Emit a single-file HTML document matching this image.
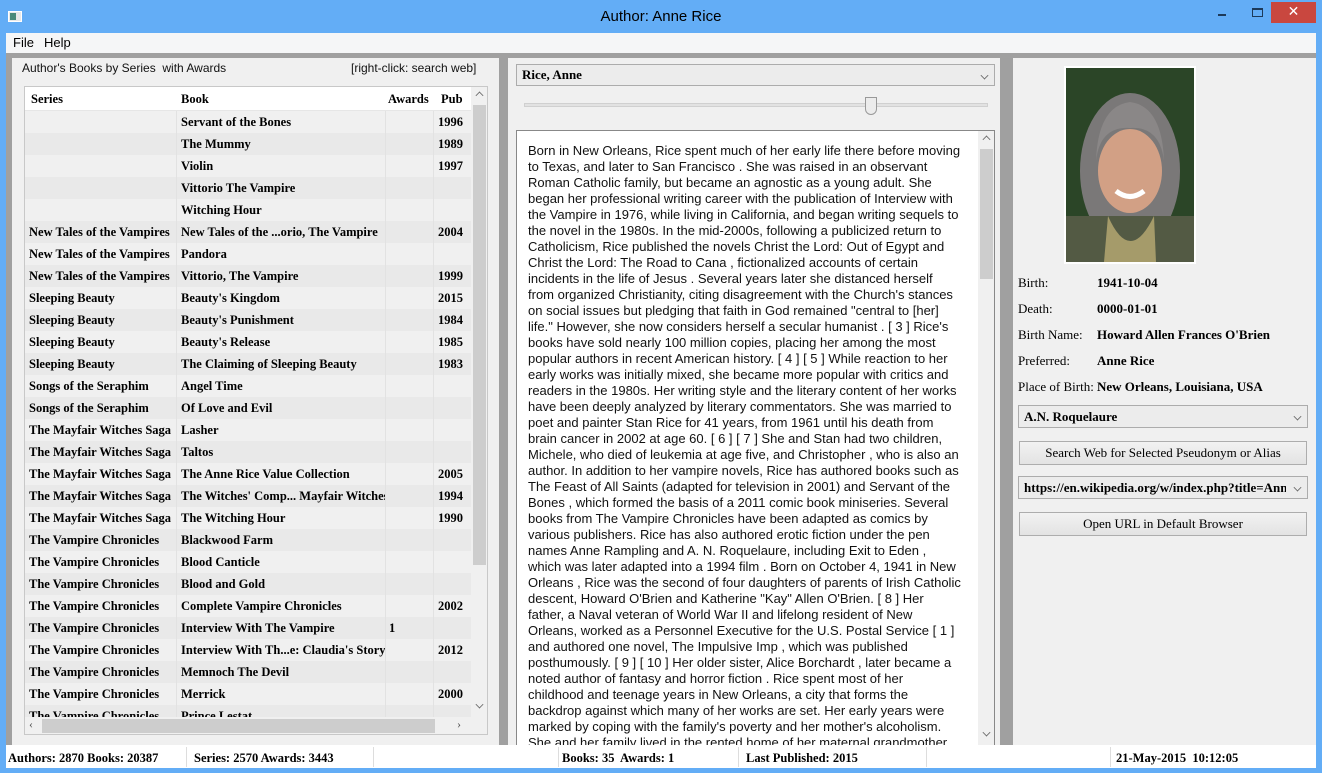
<!DOCTYPE html>
<html><head><meta charset="utf-8"><style>
*{margin:0;padding:0;box-sizing:border-box}
body{width:1322px;height:773px;overflow:hidden;background:#63adf6;position:relative;font-family:"Liberation Serif",serif;}
.abs{position:absolute}
.title{left:0;top:0;width:1322px;height:33px;text-align:center;font:15px "Liberation Sans",sans-serif;line-height:34px;color:#000}
.menu{left:6px;top:33px;width:1310px;height:20px;background:#f5f6f7;font:13px "Liberation Sans",sans-serif}
.menu span{position:absolute;top:2px}
.client{left:6px;top:53px;width:1310px;height:692px;background:#a0a0a0}
.panel{background:#f0f0f0}
.tbl{left:24px;top:86px;width:464px;height:649px;background:#fff;border:1px solid #c8c8c8;overflow:hidden}
.row{position:absolute;left:0;width:446px;height:22px;font-weight:bold;font-size:12.5px;line-height:22px}
.row span{position:absolute;top:0;white-space:nowrap;overflow:hidden}
.c1{left:4px;width:146px}.c2{left:156px;width:205px}.c3{left:364px}.c4{left:413px}
.row .ln{position:absolute;top:0;height:22px;width:1px;background:#e2e2e2}
.txt{font:13px "Liberation Sans",sans-serif;line-height:16px;color:#111}
.lbl{font-size:13px;position:absolute;left:1018px}
.val{font-size:13px;position:absolute;left:1097px;font-weight:bold}
.combo{background:#ececec;border:1px solid #acacac;font-weight:bold;font-size:13px;padding-left:5px;line-height:20px}
.arr{position:absolute;right:6px;top:7px;width:7px;height:7px;border-right:1.5px solid #666;border-bottom:1.5px solid #666;transform:rotate(45deg) scale(.8);}
.btn{background:linear-gradient(#f2f2f2,#e3e3e3);border:1px solid #adadad;font-size:13px;text-align:center;line-height:21px}
.status{left:6px;top:745px;width:1310px;height:23px;background:#fff;font-weight:bold;font-size:12.5px;line-height:26px}
.status span{position:absolute;top:0}
.status i{position:absolute;top:2px;width:1px;height:20px;background:#ddd}
</style></head><body>
<div class="abs title">Author: Anne Rice</div>
<div class="abs" style="left:8px;top:11px;width:14px;height:11px;background:#e8e8e8;border:1px solid #fff"><div style="width:6px;height:7px;margin:1px;background:#4a8a7a"></div></div>
<div class="abs" style="left:1218px;top:14px;width:8px;height:2px;background:#1d3a5a"></div>
<div class="abs" style="left:1252px;top:8px;width:11px;height:9px;border:1px solid #1d3a5a;border-top-width:2px"></div>
<div class="abs" style="left:1271px;top:2px;width:45px;height:21px;background:#c9473f;color:#fff;text-align:center;font:bold 14px 'DejaVu Sans';line-height:21px">✕</div>
<div class="abs menu"><span style="left:7px">File</span><span style="left:38px">Help</span></div>
<div class="abs client"></div>
<div class="abs panel" style="left:12px;top:58px;width:487px;height:687px"></div>
<div class="abs txt" style="left:22px;top:60px;font-size:12px">Author's Books by Series&nbsp; with Awards</div>
<div class="abs txt" style="left:351px;top:60px;font-size:12px">[right-click: search web]</div>
<div class="abs tbl">
<div class="row" style="top:0;background:#fff;font-size:12.5px;line-height:24px;height:24px;border-bottom:1px solid #e6e6e6"><span class="c1" style="left:6px">Series</span><span class="c2">Book</span><span class="c3" style="left:363px">Awards</span><span class="c4" style="left:416px">Pub</span></div>
<div id="rows"></div>
<div class="abs" style="left:446px;top:0;width:17px;height:630px;background:#f0f0f0"><div style="position:absolute;left:2px;top:18px;width:13px;height:460px;background:#cdcdcd"></div><div class="arr" style="left:5px;top:5px;transform:rotate(225deg) scale(.8)"></div><div class="arr" style="left:5px;top:614px"></div></div>
<div class="abs" style="left:0;top:630px;width:463px;height:18px;background:#f0f0f0"><div style="position:absolute;left:17px;top:2px;width:393px;height:14px;background:#cdcdcd"></div><div style="position:absolute;left:4px;top:0;font-size:12px;color:#555">‹</div><div style="position:absolute;left:432px;top:0;font-size:12px;color:#555">›</div></div>
</div>
<div class="abs panel" style="left:508px;top:58px;width:492px;height:687px"></div>
<div class="abs combo" style="left:516px;top:64px;width:479px;height:22px">Rice, Anne<div class="arr"></div></div>
<div class="abs" style="left:524px;top:103px;width:464px;height:4px;background:#e2e2e2;border:1px solid #d0d0d0"></div>
<div class="abs" style="left:865px;top:97px;width:12px;height:18px;background:#ececec;border:1px solid #999;border-radius:0 0 6px 6px"></div>
<div class="abs" style="left:516px;top:130px;width:479px;height:615px;background:#fff;border:1px solid #888;border-bottom:none;overflow:hidden">
<div class="txt" style="position:absolute;left:11px;top:12px;width:433px">Born in New Orleans, Rice spent much of her early life there before moving to Texas, and later to San Francisco . She was raised in an observant Roman Catholic family, but became an agnostic as a young adult. She began her professional writing career with the publication of Interview with the Vampire in 1976, while living in California, and began writing sequels to the novel in the 1980s. In the mid-2000s, following a publicized return to Catholicism, Rice published the novels Christ the Lord: Out of Egypt and Christ the Lord: The Road to Cana , fictionalized accounts of certain incidents in the life of Jesus . Several years later she distanced herself from organized Christianity, citing disagreement with the Church's stances on social issues but pledging that faith in God remained "central to [her] life." However, she now considers herself a secular humanist . [ 3 ] Rice's books have sold nearly 100 million copies, placing her among the most popular authors in recent American history. [ 4 ] [ 5 ] While reaction to her early works was initially mixed, she became more popular with critics and readers in the 1980s. Her writing style and the literary content of her works have been deeply analyzed by literary commentators. She was married to poet and painter Stan Rice for 41 years, from 1961 until his death from brain cancer in 2002 at age 60. [ 6 ] [ 7 ] She and Stan had two children, Michele, who died of leukemia at age five, and Christopher , who is also an author. In addition to her vampire novels, Rice has authored books such as The Feast of All Saints (adapted for television in 2001) and Servant of the Bones , which formed the basis of a 2011 comic book miniseries. Several books from The Vampire Chronicles have been adapted as comics by various publishers. Rice has also authored erotic fiction under the pen names Anne Rampling and A. N. Roquelaure, including Exit to Eden , which was later adapted into a 1994 film . Born on October 4, 1941 in New Orleans , Rice was the second of four daughters of parents of Irish Catholic descent, Howard O'Brien and Katherine "Kay" Allen O'Brien. [ 8 ] Her father, a Naval veteran of World War II and lifelong resident of New Orleans, worked as a Personnel Executive for the U.S. Postal Service [ 1 ] and authored one novel, The Impulsive Imp , which was published posthumously. [ 9 ] [ 10 ] Her older sister, Alice Borchardt , later became a noted author of fantasy and horror fiction . Rice spent most of her childhood and teenage years in New Orleans, a city that forms the backdrop against which many of her works are set. Her early years were marked by coping with the family's poverty and her mother's alcoholism. She and her family lived in the rented home of her maternal grandmother.</div>
<div class="abs" style="left:461px;top:0;width:17px;height:615px;background:#f0f0f0"><div style="position:absolute;left:2px;top:18px;width:13px;height:130px;background:#cdcdcd"></div><div class="arr" style="left:5px;top:5px;transform:rotate(225deg) scale(.8)"></div><div class="arr" style="left:5px;top:598px"></div></div>
</div>
<div class="abs panel" style="left:1013px;top:58px;width:303px;height:687px"></div>
<svg class="abs" style="left:1064px;top:66px" width="132" height="198" viewBox="0 0 132 198">
<rect width="132" height="198" fill="#fff"/><rect x="2" y="2" width="128" height="194" fill="#2b4527"/>
<ellipse cx="66" cy="105" rx="50" ry="78" fill="#7a7878"/>
<rect x="2" y="150" width="128" height="46" fill="#535a44"/>
<path d="M44 150 Q66 200 90 150 L92 196 L40 196Z" fill="#a59b6a"/>
<ellipse cx="66" cy="105" rx="32" ry="42" fill="#d2a085"/>
<path d="M32 95 Q34 40 66 36 Q98 40 100 95 Q96 60 66 62 Q36 60 32 95Z" fill="#8a8787"/>
<path d="M52 125 Q66 136 80 125" stroke="#fff" stroke-width="5" fill="none"/>
</svg>
<div class="lbl" style="top:275px">Birth:</div><div class="val" style="top:275px">1941-10-04</div>
<div class="lbl" style="top:301px">Death:</div><div class="val" style="top:301px">0000-01-01</div>
<div class="lbl" style="top:327px">Birth Name:</div><div class="val" style="top:327px">Howard Allen Frances O'Brien</div>
<div class="lbl" style="top:353px">Preferred:</div><div class="val" style="top:353px">Anne Rice</div>
<div class="lbl" style="top:379px">Place of Birth:</div><div class="val" style="top:379px">New Orleans, Louisiana, USA</div>
<div class="abs combo" style="left:1018px;top:405px;width:290px;height:23px;line-height:22px">A.N. Roquelaure<div class="arr"></div></div>
<div class="abs btn" style="left:1019px;top:441px;width:288px;height:24px">Search Web for Selected Pseudonym or Alias</div>
<div class="abs combo" style="left:1018px;top:476px;width:290px;height:23px;line-height:22px;overflow:hidden;white-space:nowrap"><span style="display:inline-block;width:262px;overflow:hidden">https://en.wikipedia.org/w/index.php?title=Anne_R</span><div class="arr"></div></div>
<div class="abs btn" style="left:1019px;top:512px;width:288px;height:24px">Open URL in Default Browser</div>
<div class="abs status">
<span style="left:2px">Authors: 2870 Books: 20387</span><i style="left:180px"></i>
<span style="left:188px">Series: 2570 Awards: 3443</span><i style="left:367px"></i>
<span style="left:556px">Books: 35&nbsp; Awards: 1</span><i style="left:552px"></i><i style="left:732px"></i>
<span style="left:740px">Last Published: 2015</span><i style="left:920px"></i><i style="left:1104px"></i>
<span style="left:1110px">21-May-2015&nbsp; 10:12:05</span>
</div>
<script>
var d=[["","Servant of the Bones","","1996"],["","The Mummy","","1989"],["","Violin","","1997"],["","Vittorio The Vampire","",""],["","Witching Hour","",""],["New Tales of the Vampires","New Tales of the ...orio, The Vampire","","2004"],["New Tales of the Vampires","Pandora","",""],["New Tales of the Vampires","Vittorio, The Vampire","","1999"],["Sleeping Beauty","Beauty's Kingdom","","2015"],["Sleeping Beauty","Beauty's Punishment","","1984"],["Sleeping Beauty","Beauty's Release","","1985"],["Sleeping Beauty","The Claiming of Sleeping Beauty","","1983"],["Songs of the Seraphim","Angel Time","",""],["Songs of the Seraphim","Of Love and Evil","",""],["The Mayfair Witches Saga","Lasher","",""],["The Mayfair Witches Saga","Taltos","",""],["The Mayfair Witches Saga","The Anne Rice Value Collection","","2005"],["The Mayfair Witches Saga","The Witches' Comp... Mayfair Witches","","1994"],["The Mayfair Witches Saga","The Witching Hour","","1990"],["The Vampire Chronicles","Blackwood Farm","",""],["The Vampire Chronicles","Blood Canticle","",""],["The Vampire Chronicles","Blood and Gold","",""],["The Vampire Chronicles","Complete Vampire Chronicles","","2002"],["The Vampire Chronicles","Interview With The Vampire","1",""],["The Vampire Chronicles","Interview With Th...e: Claudia's Story","","2012"],["The Vampire Chronicles","Memnoch The Devil","",""],["The Vampire Chronicles","Merrick","","2000"],["The Vampire Chronicles","Prince Lestat","",""]];
var h="";d.forEach(function(r,i){h+='<div class="row" style="top:'+(24+i*22)+'px;background:'+(i%2?'#e9e9e9':'#f0f0f0')+'"><span class="c1">'+r[0]+'</span><span class="c2">'+r[1]+'</span><span class="c3">'+r[2]+'</span><span class="c4">'+r[3]+'</span><b class="ln" style="left:151px"></b><b class="ln" style="left:360px"></b><b class="ln" style="left:408px"></b></div>'});
document.getElementById("rows").innerHTML=h;
</script>
</body></html>
